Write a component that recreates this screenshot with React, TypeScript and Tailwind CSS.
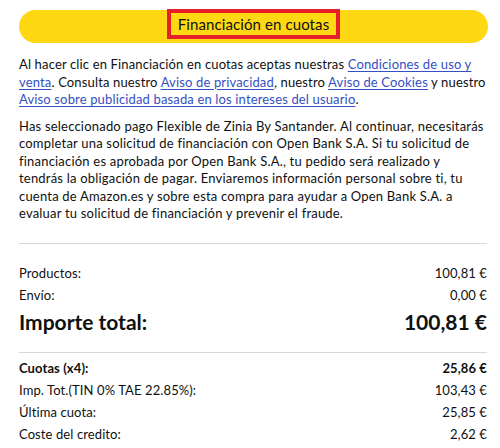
import React from "react";

const Link = ({ children }: { children: React.ReactNode }) => (
  <a className="text-[#3550c2] underline underline-offset-2 decoration-1">{children}</a>
);

const Row = ({ label, value, bold }: { label: string; value: string; bold?: boolean }) => (
  <div className={`flex h-[22px] items-center justify-between text-[13px] tracking-[0.1px] ${bold ? "font-bold" : ""}`}>
    <span>{label}</span>
    <span>{value}</span>
  </div>
);

export default function App() {
  return (
    <div
      className="w-[500px] h-[448px] overflow-hidden bg-white text-[#0f1111]"
      style={{ fontFamily: "Lato, 'Noto Sans', sans-serif" }}
    >
      <div className="pl-[19px] pr-[12px] pt-[10px]">
        <div className="h-[33px] rounded-full bg-[#ffd814] flex justify-center items-start">
          <div className="-mt-[1px] h-[30px] border-4 border-[#e5202a] pl-[7px] pr-[7px] flex items-center text-[15px] leading-none tracking-[0.1px]">
            Financiación en cuotas
          </div>
        </div>
      </div>
      <div className="pl-[19px] pr-[13px]">
        <p className="mt-[13px] -mr-[8px] text-[13px] leading-[17.5px] tracking-[0.15px]">
          Al hacer clic en Financiación en cuotas aceptas nuestras <Link>Condiciones de uso y venta</Link>. Consulta
          nuestro <Link>Aviso de privacidad</Link>, nuestro <Link>Aviso de Cookies</Link> y nuestro{" "}
          <Link>Aviso sobre publicidad basada en los intereses del usuario</Link>.
        </p>
        <p className="mt-[9px] text-[13px] leading-[17.5px] tracking-[0.2px]">
          Has seleccionado pago Flexible de Zinia By Santander. Al continuar, necesitarás completar una solicitud de
          financiación con Open Bank S.A. Si tu solicitud de financiación es aprobada por Open Bank S.A., tu pedido será
          realizado y tendrás la obligación de pagar. Enviaremos información personal sobre ti, tu cuenta de Amazon.es y
          sobre esta compra para ayudar a Open Bank S.A. a evaluar tu solicitud de financiación y prevenir el fraude.
        </p>
        <div className="mt-[20px] h-px bg-[#d5d9d9]" />
        <div className="mt-[19px]">
          <Row label="Productos:" value="100,81 €" />
          <Row label="Envío:" value="0,00 €" />
          <div className="flex h-[31px] items-center justify-between text-[21px] font-bold">
            <span>Importe total:</span>
            <span>100,81 €</span>
          </div>
        </div>
        <div className="mt-[14px] h-px bg-[#d5d9d9]" />
        <div className="mt-[5px]">
          <Row label="Cuotas (x4):" value="25,86 €" bold />
          <Row label="Imp. Tot.(TIN 0% TAE 22.85%):" value="103,43 €" />
          <Row label="Última cuota:" value="25,85 €" />
          <Row label="Coste del credito:" value="2,62 €" />
        </div>
      </div>
    </div>
  );
}
